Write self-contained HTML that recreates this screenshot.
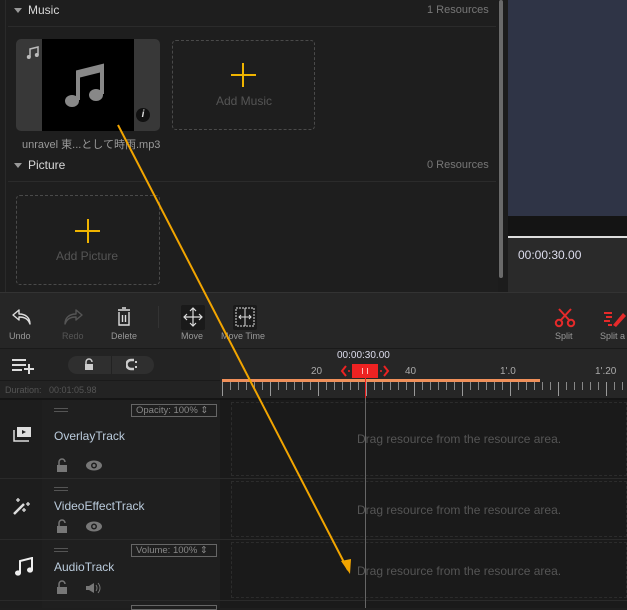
<!DOCTYPE html>
<html><head><meta charset="utf-8"><style>
*{margin:0;padding:0;box-sizing:border-box}
body{width:627px;height:608px;overflow:hidden;background:#1e1e1e;font-family:"Liberation Sans","Noto Sans CJK JP",sans-serif;position:relative;color:#ccc}
.a{position:absolute}
.t{font-size:12px}
</style></head><body>
<div class="a" style="left:0;top:0;width:498px;height:292px;background:#1e1e1e"></div>
<div class="a" style="left:5px;top:0;width:1px;height:292px;background:#2a2a2a"></div>
<div class="a" style="left:14px;top:8px;width:0;height:0;border-left:4px solid transparent;border-right:4px solid transparent;border-top:5px solid #999"></div>
<div class="a t" style="left:28px;top:3px;color:#d8d8d8">Music</div>
<div class="a" style="left:427px;top:4px;font-size:11px;color:#777">1 Resources</div>
<div class="a" style="left:8px;top:26px;width:488px;height:1px;background:#2b2b2b"></div>
<div class="a" style="left:16px;top:39px;width:144px;height:92px;background:#383838;border-radius:5px"></div>
<div class="a" style="left:42px;top:39px;width:92px;height:92px;background:#000"></div>
<svg class="a" style="left:26px;top:46px" width="14" height="14"><path d="M4 11V3l8-2v8" stroke="#bbb" stroke-width="1.5" fill="none"/><circle cx="2.8" cy="11" r="2" fill="#bbb"/><circle cx="10.8" cy="9" r="2" fill="#bbb"/></svg>
<svg class="a" style="left:64px;top:62px" width="42" height="48"><path d="M14 38V10l24-6v28" stroke="#888" stroke-width="4" fill="none"/><path d="M14 10l24-6v6l-24 6z" fill="#888"/><ellipse cx="8" cy="39" rx="7" ry="6" fill="#888"/><ellipse cx="32" cy="33" rx="7" ry="6" fill="#888"/></svg>
<div class="a" style="left:136px;top:108px;width:14px;height:14px;border-radius:7px;background:#111;color:#ddd;font-size:10px;font-style:italic;font-weight:bold;text-align:center;line-height:14px">i</div>
<div class="a" style="left:22px;top:136px;font-size:11px;color:#999">unravel 東...として時雨.mp3</div>
<div class="a" style="left:172px;top:40px;width:143px;height:90px;border:1px dashed #4a4a4a;border-radius:4px"></div>
<div class="a" style="left:231px;top:74px;width:25px;height:2px;background:#f0b400"></div>
<div class="a" style="left:242px;top:63px;width:2px;height:24px;background:#f0b400"></div>
<div class="a t" style="left:216px;top:94px;color:#555">Add Music</div>
<div class="a" style="left:14px;top:163px;width:0;height:0;border-left:4px solid transparent;border-right:4px solid transparent;border-top:5px solid #999"></div>
<div class="a t" style="left:28px;top:158px;color:#d8d8d8">Picture</div>
<div class="a" style="left:427px;top:159px;font-size:11px;color:#777">0 Resources</div>
<div class="a" style="left:8px;top:181px;width:488px;height:1px;background:#2b2b2b"></div>
<div class="a" style="left:16px;top:195px;width:144px;height:90px;border:1px dashed #4a4a4a;border-radius:4px"></div>
<div class="a" style="left:75px;top:230px;width:25px;height:2px;background:#f0b400"></div>
<div class="a" style="left:87px;top:219px;width:2px;height:24px;background:#f0b400"></div>
<div class="a t" style="left:56px;top:249px;color:#555">Add Picture</div>
<div class="a" style="left:498px;top:0;width:10px;height:292px;background:#1c1c1c"></div>
<div class="a" style="left:499px;top:0;width:4px;height:278px;background:#6a6a6a;border-radius:2px"></div>
<div class="a" style="left:508px;top:0;width:119px;height:216px;background:#2f3446"></div>
<div class="a" style="left:508px;top:216px;width:119px;height:20px;background:#141414"></div>
<div class="a" style="left:508px;top:236px;width:119px;height:2px;background:#ddd"></div>
<div class="a" style="left:508px;top:238px;width:119px;height:54px;background:#2a2a2a"></div>
<div class="a t" style="left:518px;top:248px;color:#dde">00:00:30.00</div>
<div class="a" style="left:0;top:292px;width:627px;height:1px;background:#333"></div>
<div class="a" style="left:0;top:293px;width:627px;height:55px;background:#262626"></div>
<svg class="a" style="left:11px;top:308px" width="22" height="18"><path d="M8 2L2 7l6 5V9c6 0 9 2 11 7 0-6-4-10-11-10z" stroke="#ddd" stroke-width="1.4" fill="none" stroke-linejoin="round"/></svg>
<div class="a" style="left:9px;top:331px;font-size:9px;color:#999">Undo</div>
<svg class="a" style="left:62px;top:308px" width="22" height="18"><path d="M14 2l6 5-6 5V9c-6 0-9 2-11 7 0-6 4-10 11-10z" stroke="#555" stroke-width="1.4" fill="none" stroke-linejoin="round"/></svg>
<div class="a" style="left:62px;top:331px;font-size:9px;color:#555">Redo</div>
<svg class="a" style="left:115px;top:307px" width="18" height="20"><path d="M3 3h12M7 1h4M4 5v13h10V5M7.5 8v7M10.5 8v7" stroke="#ddd" stroke-width="1.4" fill="none"/></svg>
<div class="a" style="left:111px;top:331px;font-size:9px;color:#999">Delete</div>
<div class="a" style="left:158px;top:306px;width:1px;height:22px;background:#333"></div>
<div class="a" style="left:181px;top:305px;width:24px;height:25px;background:#1a1a1a;border-radius:2px"></div>
<svg class="a" style="left:183px;top:307px" width="20" height="20"><path d="M10 1v18M1 10h18M7 4l3-3 3 3M7 16l3 3 3-3M4 7l-3 3 3 3M16 7l3 3-3 3" stroke="#ddd" stroke-width="1.2" fill="none"/></svg>
<div class="a" style="left:181px;top:331px;font-size:9px;color:#999">Move</div>
<div class="a" style="left:233px;top:305px;width:24px;height:25px;background:#1a1a1a;border-radius:2px"></div>
<svg class="a" style="left:235px;top:307px" width="20" height="20"><rect x="1" y="1" width="18" height="18" stroke="#ddd" fill="none" stroke-dasharray="2 1"/><path d="M10 1v18M4 10h12M6 8l-2 2 2 2M14 8l2 2-2 2" stroke="#ddd" fill="none"/></svg>
<div class="a" style="left:221px;top:331px;font-size:9px;color:#999">Move Time</div>
<svg class="a" style="left:554px;top:308px" width="22" height="20"><path d="M5 1l11 12M17 1L6 13" stroke="#e52a2a" stroke-width="2"/><circle cx="5" cy="15" r="3.2" stroke="#e52a2a" stroke-width="2" fill="none"/><circle cx="17" cy="15" r="3.2" stroke="#e52a2a" stroke-width="2" fill="none"/></svg>
<div class="a" style="left:555px;top:331px;font-size:9px;color:#999">Split</div>
<svg class="a" style="left:603px;top:308px" width="24" height="20"><path d="M1 5h8M3 9h6M1 13h6M5 17h4" stroke="#e52a2a" stroke-width="2"/><path d="M10 17L20 5l3 3-10 11z" fill="#e52a2a"/></svg>
<div class="a" style="left:600px;top:331px;font-size:9px;color:#999">Split a</div>
<div class="a" style="left:0;top:348px;width:627px;height:1px;background:#1a1a1a"></div>
<div class="a" style="left:0;top:349px;width:220px;height:49px;background:#232323"></div>
<svg class="a" style="left:11px;top:358px" width="24" height="16"><path d="M1 2h14M1 7h14M1 12h10M13 11h10M18 6v10" stroke="#ddd" stroke-width="2"/></svg>
<div class="a" style="left:68px;top:356px;width:86px;height:18px;background:#2f2f2f;border-radius:9px"></div>
<div class="a" style="left:111px;top:356px;width:1px;height:18px;background:#222"></div>
<svg class="a" style="left:84px;top:358px" width="10" height="13"><path d="M2 6V4a3 3 0 0 1 6 0" stroke="#ccc" stroke-width="1.5" fill="none"/><rect x="1" y="6" width="8" height="6" fill="#ccc"/></svg>
<svg class="a" style="left:126px;top:358px" width="12" height="13"><path d="M8 2H5a4 4 0 0 0 0 9h3" stroke="#ccc" stroke-width="2.5" fill="none"/><path d="M10 3v2M10 8v2" stroke="#ccc" stroke-width="2"/></svg>
<div class="a" style="left:0;top:380px;width:220px;height:1px;background:#1a1a1a"></div>
<div class="a" style="left:5px;top:385px;font-size:9px;color:#555">Duration:&nbsp;&nbsp; 00:01:05.98</div>
<div class="a" style="left:220px;top:349px;width:407px;height:49px;background:#262626"></div>
<div class="a" style="left:337px;top:350px;font-size:10px;color:#dde">00:00:30.00</div>
<div class="a" style="left:311px;top:366px;font-size:10px;color:#aaa">20</div>
<div class="a" style="left:405px;top:366px;font-size:10px;color:#aaa">40</div>
<div class="a" style="left:500px;top:366px;font-size:10px;color:#aaa">1'.0</div>
<div class="a" style="left:595px;top:366px;font-size:10px;color:#aaa">1'.20</div>
<div class="a" style="left:352px;top:364px;width:26px;height:14px;background:#e22"></div>
<div class="a" style="left:362px;top:368px;width:6px;height:6px;border-left:1px solid #fbb;border-right:1px solid #fbb"></div>
<svg class="a" style="left:339px;top:364px" width="52" height="14"><path d="M7 2L3 7l4 5M45 2l4 5-4 5" stroke="#e22" stroke-width="2" fill="none"/><circle cx="10" cy="7" r="1" fill="#e22"/><circle cx="42" cy="7" r="1" fill="#e22"/></svg>
<div class="a" style="left:222px;top:379px;width:318px;height:3px;background:#f0905a"></div>
<div class="a" style="left:222px;top:382px;width:405px;height:8px;background:repeating-linear-gradient(90deg,#888 0 1px,transparent 1px 8px)"></div>
<div class="a" style="left:222px;top:382px;width:405px;height:14px;background:repeating-linear-gradient(90deg,#999 0 1px,transparent 1px 48px)"></div>
<div class="a" style="left:0;top:398px;width:627px;height:2px;background:#151515"></div>
<div class="a" style="left:0;top:400px;width:42px;height:208px;background:#1d1d1d"></div>
<div class="a" style="left:42px;top:400px;width:178px;height:208px;background:#1f1f1f"></div>
<div class="a" style="left:220px;top:400px;width:407px;height:208px;background:#1a1a1a"></div>
<div class="a" style="left:0;top:478px;width:627px;height:1px;background:#2a2a2a"></div>
<div class="a" style="left:0;top:539px;width:627px;height:1px;background:#2a2a2a"></div>
<div class="a" style="left:0;top:600px;width:627px;height:1px;background:#2a2a2a"></div>
<div class="a" style="left:231px;top:402px;width:396px;height:74px;border:1px dashed #2c2c2c"></div>
<div class="a" style="left:231px;top:481px;width:396px;height:56px;border:1px dashed #2c2c2c"></div>
<div class="a" style="left:231px;top:542px;width:396px;height:56px;border:1px dashed #2c2c2c"></div>
<div class="a" style="left:357px;top:432px;font-size:12px;color:#555">Drag resource from the resource area.</div>
<div class="a" style="left:357px;top:503px;font-size:12px;color:#555">Drag resource from the resource area.</div>
<div class="a" style="left:357px;top:564px;font-size:12px;color:#555">Drag resource from the resource area.</div>
<div class="a" style="left:54px;top:408px;width:14px;height:4px;border-top:1px solid #555;border-bottom:1px solid #555"></div>
<div class="a" style="left:131px;top:404px;width:86px;height:13px;border:1px solid #666;font-size:9.5px;color:#888;padding-left:4px;line-height:11px">Opacity: 100% ⇕</div>
<svg class="a" style="left:13px;top:425px" width="20" height="18"><rect x="4" y="2" width="14" height="10" fill="#ddd"/><path d="M9 5l4 2-4 2z" fill="#222"/><path d="M1 5v11h15" stroke="#ddd" stroke-width="1.5" fill="none"/></svg>
<div class="a t" style="left:54px;top:429px;color:#bcd">OverlayTrack</div>
<svg class="a" style="left:56px;top:458px" width="12" height="14"><path d="M3 7V4a3 3 0 0 1 6 0" stroke="#777" stroke-width="1.5" fill="none"/><rect x="1" y="7" width="10" height="7" fill="#777"/></svg>
<svg class="a" style="left:85px;top:460px" width="18" height="11"><ellipse cx="9" cy="5.5" rx="8" ry="5" fill="#777"/><circle cx="9" cy="5.5" r="3" fill="#1f1f1f"/><circle cx="9" cy="5.5" r="1.5" fill="#777"/></svg>
<div class="a" style="left:54px;top:487px;width:14px;height:4px;border-top:1px solid #555;border-bottom:1px solid #555"></div>
<svg class="a" style="left:12px;top:496px" width="22" height="20"><path d="M2 18L12 8" stroke="#ddd" stroke-width="2.5"/><path d="M6 2v4M4 4h4M16 6v4M14 8h4M12 12v4M10 14h4" stroke="#ddd" stroke-width="1.3"/></svg>
<div class="a t" style="left:54px;top:499px;color:#bcd">VideoEffectTrack</div>
<svg class="a" style="left:56px;top:519px" width="12" height="14"><path d="M3 7V4a3 3 0 0 1 6 0" stroke="#777" stroke-width="1.5" fill="none"/><rect x="1" y="7" width="10" height="7" fill="#777"/></svg>
<svg class="a" style="left:85px;top:521px" width="18" height="11"><ellipse cx="9" cy="5.5" rx="8" ry="5" fill="#777"/><circle cx="9" cy="5.5" r="3" fill="#1f1f1f"/><circle cx="9" cy="5.5" r="1.5" fill="#777"/></svg>
<div class="a" style="left:54px;top:548px;width:14px;height:4px;border-top:1px solid #555;border-bottom:1px solid #555"></div>
<div class="a" style="left:131px;top:544px;width:86px;height:13px;border:1px solid #666;font-size:9.5px;color:#888;padding-left:4px;line-height:11px">Volume: 100% ⇕</div>
<svg class="a" style="left:14px;top:557px" width="20" height="20"><path d="M6 16V4l12-3v12" stroke="#eee" stroke-width="2" fill="none"/><ellipse cx="4" cy="16" rx="3" ry="2.6" fill="#eee"/><ellipse cx="16" cy="13" rx="3" ry="2.6" fill="#eee"/></svg>
<div class="a t" style="left:54px;top:560px;color:#bcd">AudioTrack</div>
<svg class="a" style="left:56px;top:580px" width="12" height="14"><path d="M3 7V4a3 3 0 0 1 6 0" stroke="#777" stroke-width="1.5" fill="none"/><rect x="1" y="7" width="10" height="7" fill="#777"/></svg>
<svg class="a" style="left:85px;top:582px" width="16" height="12"><path d="M1 4h3l5-3v10L4 8H1z" fill="#777"/><path d="M11 3q2 3 0 6M13 1q4 5 0 10" stroke="#777" stroke-width="1" fill="none"/></svg>
<div class="a" style="left:131px;top:605px;width:86px;height:5px;border:1px solid #666"></div>
<div class="a" style="left:365px;top:378px;width:1px;height:230px;background:#666"></div>
<div class="a" style="left:365px;top:364px;width:1px;height:34px;background:#e22"></div>
<svg class="a" style="left:0;top:0" width="627" height="608"><line x1="118" y1="125" x2="348" y2="570" stroke="#f2a500" stroke-width="2"/><path d="M341 561l9 13 1-15z" fill="#f2a500"/></svg>
</body></html>
